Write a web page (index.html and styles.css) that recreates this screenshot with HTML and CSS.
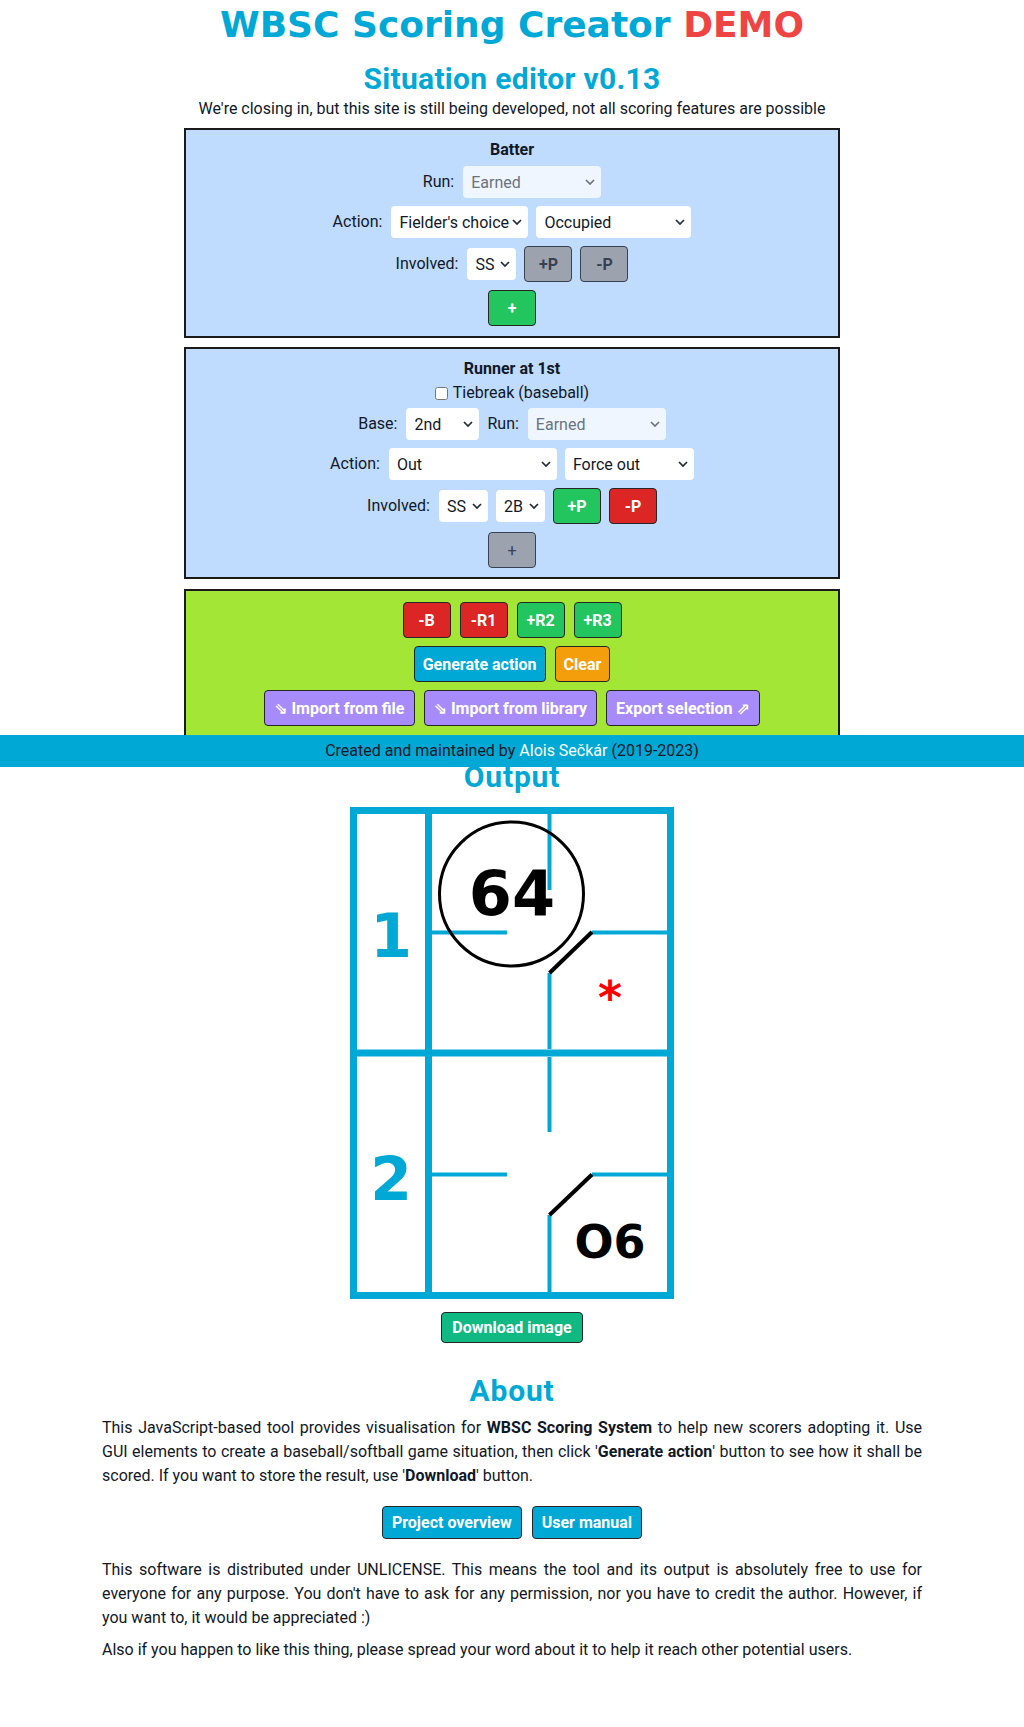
FILE: index.html
```html
<!DOCTYPE html>
<html lang="en">
<head>
<meta charset="utf-8">
<title>WBSC Scoring Creator</title>
<link rel="stylesheet" href="styles.css">
</head>
<body>
<main class="page">
  <h1 class="title">WBSC Scoring Creator <span class="demo">DEMO</span></h1>
  <h2 class="heading heading-editor">Situation editor v0.13</h2>
  <p class="notice">We're closing in, but this site is still being developed, not all scoring features are possible</p>

  <section class="panel panel-blue panel-batter">
    <div class="panel-title">Batter</div>
    <div class="row">
      <label class="lbl">Run:</label>
      <span class="sel sel-disabled w-run"><select disabled><option>Earned</option></select><svg class="chev" width="10" height="6" viewBox="0 0 10 6"><path d="M1 1 L5 5 L9 1" /></svg></span>
    </div>
    <div class="row">
      <label class="lbl">Action:</label>
      <span class="sel w-fc"><select><option>Fielder's choice</option></select><svg class="chev" width="10" height="6" viewBox="0 0 10 6"><path d="M1 1 L5 5 L9 1" /></svg></span>
      <span class="sel w-occ"><select><option>Occupied</option></select><svg class="chev" width="10" height="6" viewBox="0 0 10 6"><path d="M1 1 L5 5 L9 1" /></svg></span>
    </div>
    <div class="row row-btn">
      <label class="lbl">Involved:</label>
      <span class="sel w-pos"><select><option>SS</option></select><svg class="chev" width="10" height="6" viewBox="0 0 10 6"><path d="M1 1 L5 5 L9 1" /></svg></span>
      <button class="btn btn-gray">+P</button>
      <button class="btn btn-gray">-P</button>
    </div>
    <div class="row row-btn">
      <button class="btn btn-green">+</button>
    </div>
  </section>

  <section class="panel panel-blue panel-runner">
    <div class="panel-title">Runner at 1st</div>
    <div class="tiebreak"><input type="checkbox" id="tb"><label for="tb">Tiebreak (baseball)</label></div>
    <div class="row row-first">
      <label class="lbl">Base:</label>
      <span class="sel w-base"><select><option>2nd</option></select><svg class="chev" width="10" height="6" viewBox="0 0 10 6"><path d="M1 1 L5 5 L9 1" /></svg></span>
      <label class="lbl">Run:</label>
      <span class="sel sel-disabled w-run"><select disabled><option>Earned</option></select><svg class="chev" width="10" height="6" viewBox="0 0 10 6"><path d="M1 1 L5 5 L9 1" /></svg></span>
    </div>
    <div class="row">
      <label class="lbl">Action:</label>
      <span class="sel w-out"><select><option>Out</option></select><svg class="chev" width="10" height="6" viewBox="0 0 10 6"><path d="M1 1 L5 5 L9 1" /></svg></span>
      <span class="sel w-force"><select><option>Force out</option></select><svg class="chev" width="10" height="6" viewBox="0 0 10 6"><path d="M1 1 L5 5 L9 1" /></svg></span>
    </div>
    <div class="row row-btn">
      <label class="lbl">Involved:</label>
      <span class="sel w-pos"><select><option>SS</option></select><svg class="chev" width="10" height="6" viewBox="0 0 10 6"><path d="M1 1 L5 5 L9 1" /></svg></span>
      <span class="sel w-pos"><select><option>2B</option></select><svg class="chev" width="10" height="6" viewBox="0 0 10 6"><path d="M1 1 L5 5 L9 1" /></svg></span>
      <button class="btn btn-green">+P</button>
      <button class="btn btn-red">-P</button>
    </div>
    <div class="row row-btn">
      <button class="btn btn-gray btn-thin">+</button>
    </div>
  </section>

  <section class="panel panel-lime">
    <div class="row row-btn row-wide">
      <button class="btn btn-red">-B</button>
      <button class="btn btn-red">-R1</button>
      <button class="btn btn-green">+R2</button>
      <button class="btn btn-green">+R3</button>
    </div>
    <div class="row row-btn row-wide">
      <button class="btn btn-cyan">Generate action</button>
      <button class="btn btn-amber">Clear</button>
    </div>
    <div class="row row-btn row-wide">
      <button class="btn btn-violet"><span class="arrow">&#x21D8;</span> Import from file</button>
      <button class="btn btn-violet"><span class="arrow">&#x21D8;</span> Import from library</button>
      <button class="btn btn-violet">Export selection <span class="arrow">&#x21D7;</span></button>
    </div>
  </section>

  <h2 class="heading heading-output">Output</h2>
  <svg class="scorebox" width="324" height="492" viewBox="0 0 324 492">
    <rect x="3.5" y="3.5" width="317" height="485" fill="#fff" stroke="#00a8d6" stroke-width="7"/>
    <line x1="78.5" y1="0" x2="78.5" y2="492" stroke="#00a8d6" stroke-width="7"/>
    <line x1="0" y1="246" x2="324" y2="246" stroke="#00a8d6" stroke-width="7"/>
    <g stroke="#00a8d6" stroke-width="4">
      <line x1="199.5" y1="7" x2="199.5" y2="83"/>
      <line x1="199.5" y1="166" x2="199.5" y2="242"/>
      <line x1="82" y1="125.5" x2="157" y2="125.5"/>
      <line x1="242" y1="125.5" x2="317" y2="125.5"/>
      <line x1="199.5" y1="250" x2="199.5" y2="325"/>
      <line x1="199.5" y1="408" x2="199.5" y2="485"/>
      <line x1="82" y1="367.5" x2="157" y2="367.5"/>
      <line x1="242" y1="367.5" x2="317" y2="367.5"/>
    </g>
    <g stroke="#000" stroke-width="4">
      <line x1="242" y1="125" x2="199.5" y2="166"/>
      <line x1="242" y1="367.5" x2="199.5" y2="408"/>
    </g>
    <circle cx="161.5" cy="87" r="72" fill="none" stroke="#000" stroke-width="3"/>
    <text class="svg-num" x="41" y="150">1</text>
    <text class="svg-num" x="41" y="393">2</text>
    <text class="svg-big" x="162" y="108">64</text>
    <text class="svg-star" x="260" y="207">*</text>
    <text class="svg-mid" x="260" y="451">O6</text>
  </svg>
  <div class="center-row download-row">
    <button class="btn btn-emerald">Download image</button>
  </div>

  <h2 class="heading heading-about">About</h2>
  <p class="text text-first">This JavaScript-based tool provides visualisation for <strong>WBSC Scoring System</strong> to help new scorers adopting it. Use GUI elements to create a baseball/softball game situation, then click '<strong>Generate action</strong>' button to see how it shall be scored. If you want to store the result, use '<strong>Download</strong>' button.</p>
  <div class="center-row links-row">
    <a class="btn btn-cyan btn-link" href="#">Project overview</a>
    <a class="btn btn-cyan btn-link" href="#">User manual</a>
  </div>
  <p class="text text-license">This software is distributed under UNLICENSE. This means the tool and its output is absolutely free to use for everyone for any purpose. You don't have to ask for any permission, nor you have to credit the author. However, if you want to, it would be appreciated :)</p>
  <p class="text text-last">Also if you happen to like this thing, please spread your word about it to help it reach other potential users.</p>
</main>
<footer class="footer">Created and maintained by <a href="#" class="footer-link">Alois Sečkár</a> (2019-2023)</footer>
</body>
</html>
```

FILE: styles.css
```css
* { box-sizing: border-box; }

html, body {
  margin: 0;
  padding: 0;
  background: #fff;
}

body {
  position: relative;
  min-height: 1727px;
  font-family: Roboto, "Liberation Sans", sans-serif;
  font-size: 16px;
  line-height: 24px;
  color: #111827;
}

.page {
  width: 820px;
  margin: 0 auto;
  display: flex;
  flex-direction: column;
  align-items: center;
}

.title {
  margin: 0;
  padding-top: 5px;
  font-family: "DejaVu Sans", Verdana, sans-serif;
  font-size: 36px;
  line-height: 40px;
  font-weight: 700;
  color: #00a8d6;
  text-align: center;
  white-space: nowrap;
}

.demo { color: #ef4444; }

.heading {
  margin: 0;
  font-size: 30px;
  line-height: 36px;
  font-weight: 700;
  color: #00a8d6;
  text-align: center;
  letter-spacing: 0.3px;
}

.heading-editor { margin-top: 16px; }
.heading-output { margin-top: 20px; letter-spacing: 0.8px; }
.heading-about { margin-top: 30px; letter-spacing: 0.8px; }

.notice {
  margin: 0;
  text-align: center;
}

.panel {
  width: 656px;
  border: 2px solid #1a1a1a;
  display: flex;
  flex-direction: column;
  align-items: center;
  gap: 8px;
}

.panel-blue { background: #bfdbfe; }

.panel-batter {
  margin-top: 7px;
  padding: 8px 0 10px;
}

.panel-runner {
  margin-top: 9px;
  padding: 8px 0 9px;
}

.panel-lime {
  margin-top: 10px;
  padding: 11px 0 11px;
  background: #a3e635;
}

.panel-title {
  font-weight: 700;
  line-height: 24px;
  margin-bottom: -4px;
}

.panel-runner .panel-title { margin-bottom: -8px; }

.tiebreak {
  display: flex;
  align-items: center;
  gap: 5px;
  line-height: 24px;
  margin-bottom: -5px;
}

.tiebreak input {
  width: 13px;
  height: 13px;
  margin: 0;
}

.row {
  display: flex;
  align-items: center;
  justify-content: center;
  gap: 8px;
  height: 32px;
}

.row-btn { height: 36px; }
.row-wide { gap: 9px; }

.lbl { margin-right: 1px; }

.sel {
  position: relative;
  display: inline-flex;
  height: 32px;
}

.sel select {
  appearance: none;
  -webkit-appearance: none;
  width: 100%;
  height: 32px;
  border: none;
  border-radius: 4px;
  background: #fff;
  padding: 0 18px 0 8px;
  font-family: inherit;
  font-size: 16px;
  color: #111827;
  outline: none;
}

.sel-disabled select {
  background: #eff6ff;
  color: #6b7280;
  opacity: 1;
}

.chev {
  position: absolute;
  right: 6px;
  top: 13px;
  pointer-events: none;
}

.chev path {
  fill: none;
  stroke: #1f2937;
  stroke-width: 1.7;
}

.sel-disabled .chev path { stroke: #6b7280; }

.w-run { width: 138px; }
.w-fc { width: 137px; }
.w-occ { width: 155px; }
.w-pos { width: 49px; }
.w-base { width: 73px; }
.w-out { width: 168px; }
.w-force { width: 129px; }

.btn {
  height: 36px;
  min-width: 48px;
  padding: 0 8px;
  border: 1px solid #262626;
  border-radius: 4px;
  font-family: inherit;
  font-size: 16px;
  font-weight: 700;
  color: #fff;
  display: inline-flex;
  align-items: center;
  justify-content: center;
  gap: 4px;
  text-decoration: none;
  white-space: nowrap;
}

.arrow {
  font-family: "DejaVu Sans", sans-serif;
  font-weight: 700;
  font-size: 16px;
}

.btn-gray { background: #9ca3af; color: #374151; border-color: #374151; }
.btn-thin { font-weight: 400; }
.btn-green { background: #22c55e; }
.btn-red { background: #dc2626; }
.btn-cyan { background: #00a8d6; }
.btn-amber { background: #f59e0b; }
.btn-violet { background: #a78bfa; padding: 0 9px; }
.btn-emerald { background: #10b981; height: 31px; padding: 0 10px; }

.scorebox {
  display: block;
  margin-top: 12px;
}

.svg-num {
  font-family: "DejaVu Sans", Verdana, sans-serif;
  font-weight: 700;
  font-size: 60px;
  fill: #00a8d6;
  text-anchor: middle;
}

.svg-big {
  font-family: "DejaVu Sans", Verdana, sans-serif;
  font-weight: 700;
  font-size: 62px;
  fill: #000;
  text-anchor: middle;
}

.svg-mid {
  font-family: "DejaVu Sans", Verdana, sans-serif;
  font-weight: 700;
  font-size: 46px;
  fill: #000;
  text-anchor: middle;
}

.svg-star {
  font-family: "DejaVu Sans", Verdana, sans-serif;
  font-weight: 700;
  font-size: 46px;
  fill: #ff0000;
  text-anchor: middle;
}

.center-row {
  display: flex;
  justify-content: center;
  gap: 10px;
}

.download-row { margin-top: 13px; }

.links-row { margin-top: 18px; }

.btn-link { height: 33px; padding: 0 9px; }

.text {
  width: 820px;
  margin: 0;
  text-align: justify;
}

.text-first { margin-top: 7px; }
.text-license { margin-top: 19px; }
.text-last { margin-top: 8px; }

.footer {
  position: absolute;
  left: 0;
  right: 0;
  top: 735px;
  height: 32px;
  background: #00a8d6;
  color: #111827;
  text-align: center;
  line-height: 32px;
}

.footer-link {
  color: #fff;
  text-decoration: none;
}
```
